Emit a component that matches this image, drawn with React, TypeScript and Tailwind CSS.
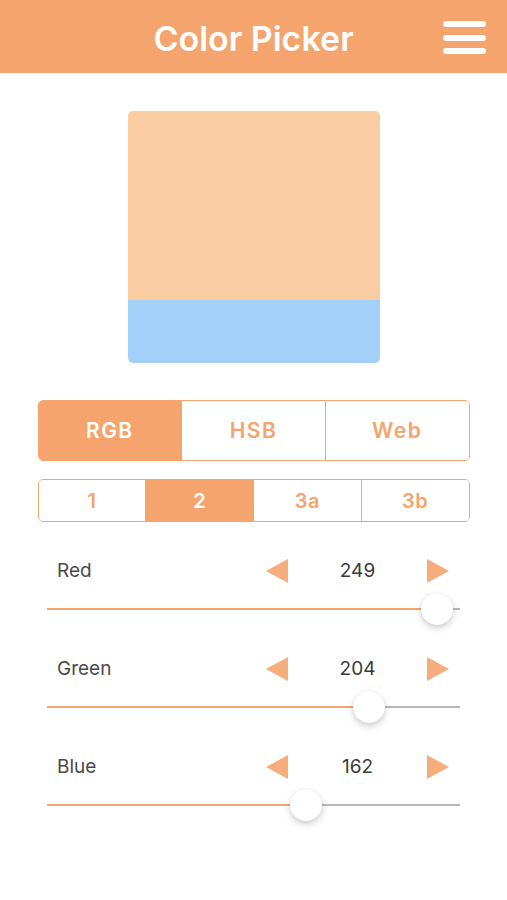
import React from "react";

function Tri({ dir }: { dir: "l" | "r" }) {
  return (
    <svg width="22" height="24" viewBox="0 0 22 24" className="shrink-0">
      {dir === "l" ? (
        <polygon points="22,0 22,24 0,12" fill="#F5AE7B" />
      ) : (
        <polygon points="0,0 0,24 22,12" fill="#F5AE7B" />
      )}
    </svg>
  );
}

function Row({ label, value }: { label: string; value: number }) {
  const pct = value / 255;
  const center = 16 + pct * (415 - 32);
  return (
    <div className="mx-[47px] flex flex-col">
      <div className="flex h-[50px] items-center">
        <div className="ml-[10px] flex-1 text-[19px] text-[#4a4a4a]">{label}</div>
        <Tri dir="l" />
        <div className="w-[139px] text-center text-[19px] text-[#3a3a3a]">{value}</div>
        <Tri dir="r" />
        <div className="w-[11px]" />
      </div>
      <div className="relative h-[26px]">
        <div className="absolute left-0 right-0 top-[12px] h-[2px] bg-[#b8b8b8]" />
        <div
          className="absolute left-0 top-[12px] h-[2px] bg-[#F4A46C]"
          style={{ width: center }}
        />
        <div
          className="absolute top-[-3px] h-[32px] w-[32px] rounded-full bg-white shadow-[0_3px_7px_rgba(0,0,0,0.2),0_0_1px_rgba(0,0,0,0.12)]"
          style={{ left: center - 16 }}
        />
      </div>
      <div className="h-[22px]" />
    </div>
  );
}

export default function App() {
  const tabs1 = ["RGB", "HSB", "Web"];
  const tabs2 = ["1", "2", "3a", "3b"];
  return (
    <div
      className="min-h-[900px] w-[507px] bg-white"
      style={{ fontFamily: "Inter, 'Noto Sans', sans-serif" }}
    >
      <div className="relative flex h-[73px] items-center justify-center bg-[#F4A46C] pt-[3px]">
        <div className="text-[34px] font-semibold text-white">Color Picker</div>
        <div className="absolute right-[21px] top-[21px] flex flex-col gap-[7.5px]">
          <div className="h-[6px] w-[43px] rounded-full bg-white" />
          <div className="h-[6px] w-[43px] rounded-full bg-white" />
          <div className="h-[6px] w-[43px] rounded-full bg-white" />
        </div>
      </div>

      <div className="mx-auto mt-[38px] flex h-[252px] w-[252px] flex-col overflow-hidden rounded-[5px]">
        <div className="h-[189px] bg-[#F9CCA2]" />
        <div className="flex-1 bg-[#A3D0F8]" />
      </div>

      <div className="mx-auto mt-[37px] flex h-[61px] w-[432px] overflow-hidden rounded-[5px] border border-[#F4A46C]">
        {tabs1.map((t, i) => (
          <div
            key={t}
            className={`flex flex-1 items-center justify-center text-[21px] font-semibold tracking-[1.5px] ${
              i > 0 ? "border-l border-[#F4A46C]" : ""
            } ${i === 0 ? "bg-[#F4A46C] text-white" : "bg-white text-[#F4A46C]"}`}
          >
            {t}
          </div>
        ))}
      </div>

      <div className="mx-auto mt-[18px] flex h-[43px] w-[432px] overflow-hidden rounded-[5px] border border-[#F4A46C]">
        {tabs2.map((t, i) => (
          <div
            key={t}
            className={`flex flex-1 items-center justify-center text-[20px] font-semibold tracking-[0.5px] ${
              i > 0 ? "border-l border-[#F4A46C]" : ""
            } ${i === 1 ? "bg-[#F4A46C] text-white" : "bg-white text-[#F4A46C]"}`}
          >
            {t}
          </div>
        ))}
      </div>

      <div className="mt-[24px]">
        <Row label="Red" value={249} />
        <Row label="Green" value={204} />
        <Row label="Blue" value={162} />
      </div>
    </div>
  );
}
